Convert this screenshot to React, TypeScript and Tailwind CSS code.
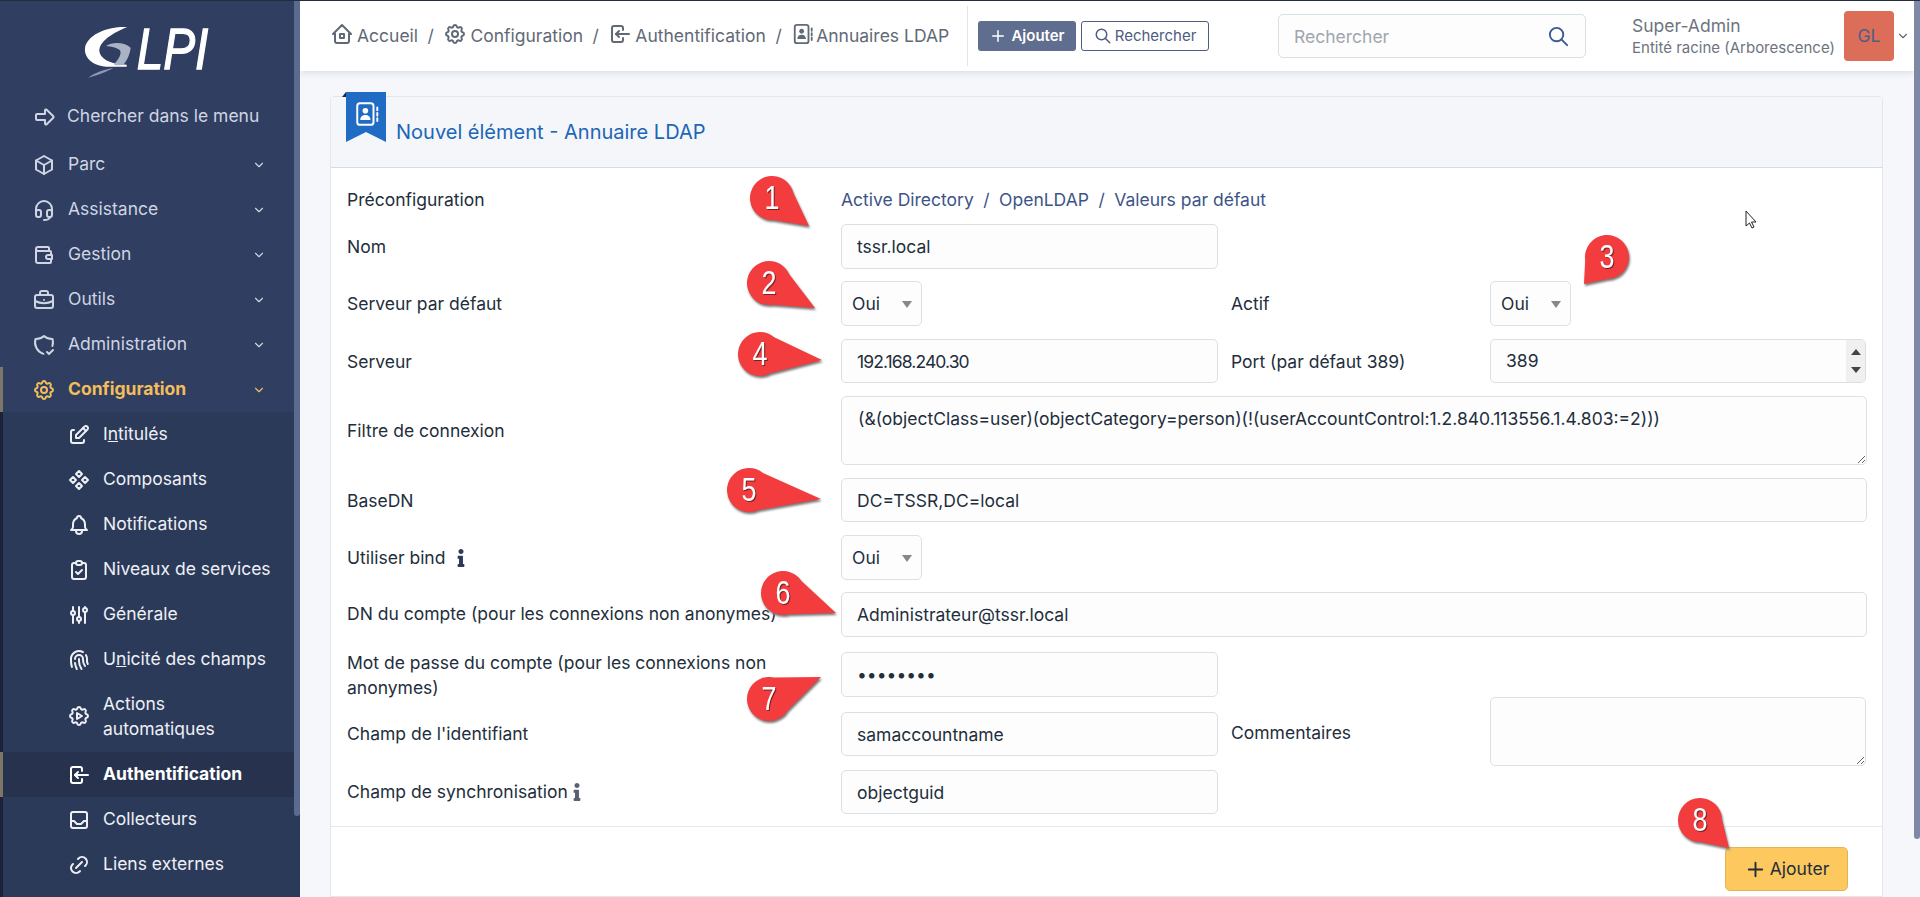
import type { ReactNode } from 'react'
import {
  TbAdjustments,
  TbArrowBigRight,
  TbBell,
  TbBox,
  TbBriefcase,
  TbChevronDown,
  TbClipboardCheck,
  TbComponents,
  TbEdit,
  TbFingerprint,
  TbHeadset,
  TbHome2,
  TbInbox,
  TbLink,
  TbLogin,
  TbPlus,
  TbSearch,
  TbSettings,
  TbSettingsAutomation,
  TbShieldCheck,
  TbWallet,
} from 'react-icons/tb'
import { FaInfo } from 'react-icons/fa'

const mainMenu = [
  { label: 'Parc', icon: TbBox },
  { label: 'Assistance', icon: TbHeadset },
  { label: 'Gestion', icon: TbWallet },
  { label: 'Outils', icon: TbBriefcase },
  { label: 'Administration', icon: TbShieldCheck },
]

const subMenu = [
  { label: <>I<u>n</u>titulés</>, icon: TbEdit },
  { label: 'Composants', icon: TbComponents },
  { label: 'Notifications', icon: TbBell },
  { label: 'Niveaux de services', icon: TbClipboardCheck },
  { label: 'Générale', icon: TbAdjustments },
  { label: <>U<u>n</u>icité des champs</>, icon: TbFingerprint },
]

const pins = [
  { n: 1, x: 772, y: 197, tx: 809, ty: 225 },
  { n: 2, x: 769, y: 282, tx: 815, ty: 307 },
  { n: 3, x: 1607, y: 256, tx: 1584, ty: 283 },
  { n: 4, x: 760, y: 353, tx: 822, ty: 359 },
  { n: 5, x: 749, y: 489, tx: 821, ty: 498 },
  { n: 6, x: 783, y: 592, tx: 836, ty: 612 },
  { n: 7, x: 769, y: 698, tx: 821, ty: 676 },
  { n: 8, x: 1700, y: 819, tx: 1729, ty: 847 },
]

function pinPath(x: number, y: number, tx: number, ty: number) {
  const r = 22
  const dist = Math.hypot(tx - x, ty - y)
  const base = Math.atan2(ty - y, tx - x)
  const spread = Math.acos(r / dist) * 0.8
  const ax = x + r * Math.cos(base - spread)
  const ay = y + r * Math.sin(base - spread)
  const bx = x + r * Math.cos(base + spread)
  const by = y + r * Math.sin(base + spread)
  return `M${ax} ${ay} L${tx} ${ty} L${bx} ${by} A${r} ${r} 0 1 1 ${ax} ${ay} Z`
}

// address book as used by GLPI: filled person in a rounded book with tabs on the right
function BookIcon({ size, strokeWidth = 2 }: { size: number; strokeWidth?: number }) {
  return (
    <svg width={size} height={size} viewBox="0 0 24 24" fill="none" stroke="currentColor" strokeWidth={strokeWidth} strokeLinecap="round">
      <rect x="3" y="2" width="15" height="20" rx="2.5" />
      <circle cx="10.5" cy="9" r="2.6" fill="currentColor" stroke="none" />
      <path d="M5.8 17.5c0-3 2-4.6 4.7-4.6s4.7 1.6 4.7 4.6z" fill="currentColor" stroke="none" />
      <path d="M21.5 6v2.5M21.5 11v2.5M21.5 16v2.5" />
    </svg>
  )
}

function Logo() {
  return (
    <div className="h-[90px] pt-[15px] pl-[70px]">
      <svg width="160" height="75" viewBox="0 0 480 225">
        <path d="M172 33 C120 30 60 50 46 90 C38 125 70 150 110 152 L170 152 L170 146 C135 146 92 135 88 105 C88 75 130 50 172 33Z" fill="#fff" />
        <path d="M108 90 C125 78 160 76 182 95 C180 115 170 135 160 146 C150 148 140 148 132 146 C145 130 156 115 150 103 C140 94 122 92 108 90Z" fill="#aab2c6" />
        <path d="M55 185 C72 172 95 162 130 156 C110 168 80 178 55 185Z" fill="#8e98b0" />
        <text x="200" y="158" fontSize="171" fontStyle="italic" fontFamily="Liberation Sans, sans-serif" fill="#fff" stroke="#fff" strokeWidth="4" textLength="215" lengthAdjust="spacingAndGlyphs">
          LPI
        </text>
      </svg>
    </div>
  )
}

function Sidebar() {
  return (
    <aside className="relative h-full w-[300px] shrink-0 bg-[#2f3e61] text-[17.5px]">
      <Logo />
      <div className="flex h-[51px] items-center gap-[10px] pl-[33px] text-[#cfd5e2]">
        <TbArrowBigRight size={24} />
        <span>Chercher dans le menu</span>
      </div>
      <div>
        {mainMenu.map(item => (
          <div key={item.label} className="flex h-[45px] w-[294px] items-center gap-[12px] pl-[32px] text-[#cfd5e2]">
            <item.icon size={24} className="shrink-0" />
            <span className="flex-1">{item.label}</span>
            <TbChevronDown size={14} className="mr-[28px]" />
          </div>
        ))}
        <div className="flex h-[45px] w-[294px] items-center gap-[12px] border-l-[3px] border-[#7d7767] pl-[29px] font-bold text-[#f2bd5a]">
          <TbSettings size={24} className="shrink-0" />
          <span className="flex-1">Configuration</span>
          <TbChevronDown size={14} className="mr-[28px]" />
        </div>
      </div>
      <div className="h-[486px] w-[300px] border-l-[3px] border-[#1b2238] bg-[#2c3a5a] text-[#eef0f5]">
        {subMenu.map((item, i) => (
          <div key={i} className="flex h-[45px] items-center gap-[12px] pl-[64px]">
            <item.icon size={24} className="shrink-0" />
            <span>{item.label}</span>
          </div>
        ))}
        <div className="flex h-[70px] items-center gap-[12px] pb-[2px] pl-[64px]">
          <TbSettingsAutomation size={24} className="shrink-0" />
          <span className="w-[150px] leading-[25px]">Actions automatiques</span>
        </div>
        <div className="-ml-[3px] flex h-[45px] w-[297px] items-center gap-[12px] border-l-[3px] border-[#7d7767] bg-[#27324e] pl-[64px] font-bold text-white">
          <TbLogin size={24} className="shrink-0" />
          <span>Authentification</span>
        </div>
        <div className="flex h-[45px] items-center gap-[12px] pl-[64px]">
          <TbInbox size={24} className="shrink-0" />
          <span>Collecteurs</span>
        </div>
        <div className="flex h-[45px] items-center gap-[12px] pl-[64px]">
          <TbLink size={24} className="shrink-0" />
          <span>Liens externes</span>
        </div>
      </div>
      <div className="absolute top-0 right-0 h-[815px] w-[6px] rounded-b-[3px] bg-[#5b6a8f]" />
    </aside>
  )
}

function Crumb({ icon, children }: { icon: ReactNode; children: ReactNode }) {
  return (
    <span className="flex items-center gap-[3px]">
      <span className="-mt-[4px]">{icon}</span>
      <span>{children}</span>
    </span>
  )
}

function Topbar() {
  return (
    <header className="flex h-[70px] shrink-0 items-center bg-white pl-[30px] text-[17.5px] text-[#626976] shadow-[0_2px_6px_rgba(30,40,70,0.12)]">
      <nav className="flex w-[637px] items-center gap-[9.5px]">
        <Crumb icon={<TbHome2 size={24} />}>Accueil</Crumb>
        <span>/</span>
        <Crumb icon={<TbSettings size={24} />}>Configuration</Crumb>
        <span>/</span>
        <Crumb icon={<TbLogin size={24} />}>Authentification</Crumb>
        <span>/</span>
        <Crumb icon={<span className="-mr-[1px] ml-[1px] block"><BookIcon size={22} /></span>}>Annuaires LDAP</Crumb>
      </nav>
      <div className="mr-[10px] h-[60px] w-px bg-[#e3e5ea]" />
      <button className="flex h-[30px] w-[98px] items-center justify-center gap-[4px] rounded-[3px] bg-[#5f6d8f] text-[15px] font-semibold text-white">
        <TbPlus size={18} /> Ajouter
      </button>
      <button className="ml-[5px] flex h-[30px] w-[128px] items-center justify-center gap-[3px] rounded-[3px] border border-[#4d5c80] text-[15px] text-[#4d5c80]">
        <TbSearch size={18} /> Rechercher
      </button>
      <div className="ml-[69px] flex h-[44px] w-[308px] items-center rounded-[5px] border border-[#dcdfe4] bg-[#fdfdfd] pr-[15px] pl-[15px]">
        <input placeholder="Rechercher" className="min-w-0 flex-1 bg-transparent pt-[2px] text-[17.5px] outline-none placeholder:text-[#a0a6af]" />
        <TbSearch size={23} className="text-[#3b5998]" />
      </div>
      <div className="ml-[46px] flex w-[212px] flex-col pt-[2px]">
        <span className="text-[17.5px] leading-[22px] text-[#6d7480]">Super-Admin</span>
        <span className="text-[15px] leading-[22px] text-[#6d7480]">Entité racine (Arborescence)</span>
      </div>
      <div className="flex h-[50px] w-[50px] items-center justify-center rounded-[4px] bg-[#db6d59] text-[17.5px] text-[#4f5f84]">GL</div>
      <TbChevronDown size={14} className="ml-[2px]" />
    </header>
  )
}

function Field({ value, type = 'text', w = 'w-[377px]' }: { value: string; type?: string; w?: string }) {
  return (
    <input
      type={type}
      defaultValue={value}
      className={`h-full ${w} rounded-[5px] border border-[#dcdfe4] bg-[#fdfdfd] px-[15px] text-[#232e3c] outline-none`}
    />
  )
}

function SelectBox() {
  return (
    <div className="flex h-[45px] w-[81px] items-center justify-between rounded-[5px] border border-[#dcdfe4] bg-[#fdfdfd] pr-[9px] pl-[10px] text-[#232e3c]">
      <span className="pt-[2px]">Oui</span>
      <span className="mt-[2px] h-0 w-0 border-x-[5px] border-t-[7px] border-x-transparent border-t-[#888]" />
    </div>
  )
}

function Form() {
  return (
    <div className="pt-[20px] pb-[12px] pl-[16px] text-[17.5px] text-[#232e3c]">
      <div className="mb-[12px] flex h-[24px] items-center">
        <span className="w-[494px]">Préconfiguration</span>
        <span className="flex gap-[9.5px] text-[#3d5488]">
          <span>Active Directory</span>
          <span>/</span>
          <span>OpenLDAP</span>
          <span>/</span>
          <span>Valeurs par défaut</span>
        </span>
      </div>
      <div className="mb-[12px] flex h-[45px] items-center">
        <span className="w-[494px] pt-[2px]">Nom</span>
        <Field value="tssr.local" />
      </div>
      <div className="mb-[13px] flex h-[45px] items-center">
        <span className="w-[494px] pt-[2px]">Serveur par défaut</span>
        <div className="w-[376px]"><SelectBox /></div>
        <span className="w-[273px] pt-[2px] pl-[14px]">Actif</span>
        <SelectBox />
      </div>
      <div className="mb-[13px] flex h-[44px] items-center">
        <span className="w-[494px] pt-[2px]">Serveur</span>
        <div className="h-full tracking-[-0.9px]"><Field value="192.168.240.30" /></div>
        <span className="w-[272px] pt-[2px] pl-[13px]">Port (par défaut 389)</span>
        <div className="flex h-full w-[376px] overflow-hidden rounded-[5px] border border-[#dcdfe4] bg-[#fdfdfd]">
          <input defaultValue="389" className="min-w-0 flex-1 bg-transparent px-[15px] outline-none" />
          <div className="flex w-[19px] flex-col items-center justify-between bg-[#f0f0f0] py-[9px]">
            <span className="h-0 w-0 border-x-[5px] border-b-[6px] border-x-transparent border-b-[#444]" />
            <span className="h-0 w-0 border-x-[5px] border-t-[6px] border-x-transparent border-t-[#444]" />
          </div>
        </div>
      </div>
      <div className="mb-[13px] flex h-[69px] items-center">
        <span className="w-[494px] pt-[2px]">Filtre de connexion</span>
        <textarea
          defaultValue="(&(objectClass=user)(objectCategory=person)(!(userAccountControl:1.2.840.113556.1.4.803:=2)))"
          className="h-full w-[1026px] rounded-[5px] border border-[#dcdfe4] bg-[#fdfdfd] px-[16px] py-[9px] outline-none"
        />
      </div>
      <div className="mb-[13px] flex h-[44px] items-center">
        <span className="w-[494px] pt-[2px]">BaseDN</span>
        <Field value="DC=TSSR,DC=local" w="w-[1026px]" />
      </div>
      <div className="mb-[13px] flex h-[44px] items-center">
        <span className="flex w-[494px] items-center gap-[7px] pt-[2px]">Utiliser bind <FaInfo size={18} className="text-[#2d3a5c]" /></span>
        <SelectBox />
      </div>
      <div className="mb-[15px] flex h-[45px] items-center">
        <span className="w-[494px]">DN du compte (pour les connexions non anonymes)</span>
        <Field value="Administrateur@tssr.local" w="w-[1026px]" />
      </div>
      <div className="flex h-[45px] items-center">
        <span className="w-[494px] pr-[60px] leading-[25px]">Mot de passe du compte (pour les connexions non anonymes)</span>
        <Field value="12345678" type="password" />
      </div>
      <div className="flex h-[72px] items-center">
        <span className="w-[494px] pt-[2px]">Champ de l'identifiant</span>
        <div className="mt-[2px] h-[44px]"><Field value="samaccountname" /></div>
        <span className="w-[272px] pl-[13px]">Commentaires</span>
        <textarea className="-mt-[3px] h-[69px] w-[376px] rounded-[5px] border border-[#dcdfe4] bg-[#fdfdfd] outline-none" />
      </div>
      <div className="mt-[1px] flex h-[44px] items-center">
        <span className="flex w-[494px] items-center">Champ de synchronisation <FaInfo size={18} className="text-[#5a6272]" /></span>
        <Field value="objectguid" />
      </div>
    </div>
  )
}

function Annotations() {
  return (
    <svg className="pointer-events-none absolute top-0 left-0" width="1920" height="897">
      {pins.map(p => (
        <g key={p.n}>
          <path d={pinPath(p.x, p.y, p.tx, p.ty)} fill="#f23c3e" className="drop-shadow-[1px_2px_1px_#777]" />
          <text
            x={p.x - 7.5}
            y={p.y + 11}
            fill="#fff"
            fontSize="33"
            fontFamily="Liberation Sans, sans-serif"
            textLength="15"
            lengthAdjust="spacingAndGlyphs"
            className="drop-shadow-[1px_1px_0_#7a2020]"
          >
            {p.n}
          </text>
        </g>
      ))}
      <path d="M1746 210 L1746 225 L1749.5 222 L1752 227 L1754 226 L1751.5 221 L1756 221 Z" fill="#fff" stroke="#222" strokeWidth="1" />
    </svg>
  )
}

export default function App() {
  return (
    <div className="relative flex h-[897px] w-[1920px] overflow-hidden border-t border-[#232e3c] bg-[#f5f7fb] font-[Inter,sans-serif]">
      <Sidebar />
      <main className="flex min-w-0 flex-1 flex-col">
        <Topbar />
        <div className="flex-1 pt-[25px] pr-[31px] pl-[30px]">
          <section className="rounded-t-[4px] border border-[#e3e6ea] bg-white">
            <div className="relative flex h-[71px] items-end border-b border-[#cfdcec] bg-[#f4f6fa] pb-[20px] pl-[65px] text-[20px] text-[#2066b5]">
              <div className="absolute -top-[5px] left-[15px] h-[50px] w-[40px] bg-[#206bc4] pt-[9px] pl-[8px] text-white [clip-path:polygon(0_0,100%_0,100%_100%,50%_80%,0_100%)]">
                <BookIcon size={26} strokeWidth={1.8} />
              </div>
              <div className="absolute -top-[5px] left-[11px] h-0 w-0 border-b-[5px] border-l-[4px] border-b-[#1a2b4a] border-l-transparent" />
              Nouvel élément - Annuaire LDAP
            </div>
            <Form />
            <div className="flex h-[70px] justify-end border-t border-[#e6e8ec] pt-[20px] pr-[34px]">
              <button className="flex h-[44px] w-[123px] items-center justify-center gap-[3px] rounded-[5px] border border-[#e3b552] bg-[#fdc85d] text-[17.5px] text-[#232e3c]">
                <TbPlus size={23} /> Ajouter
              </button>
            </div>
          </section>
        </div>
      </main>
      <div className="h-[838px] w-[6px] shrink-0 rounded-b-[3px] bg-[#7f88a6]" />
      <Annotations />
    </div>
  )
}
